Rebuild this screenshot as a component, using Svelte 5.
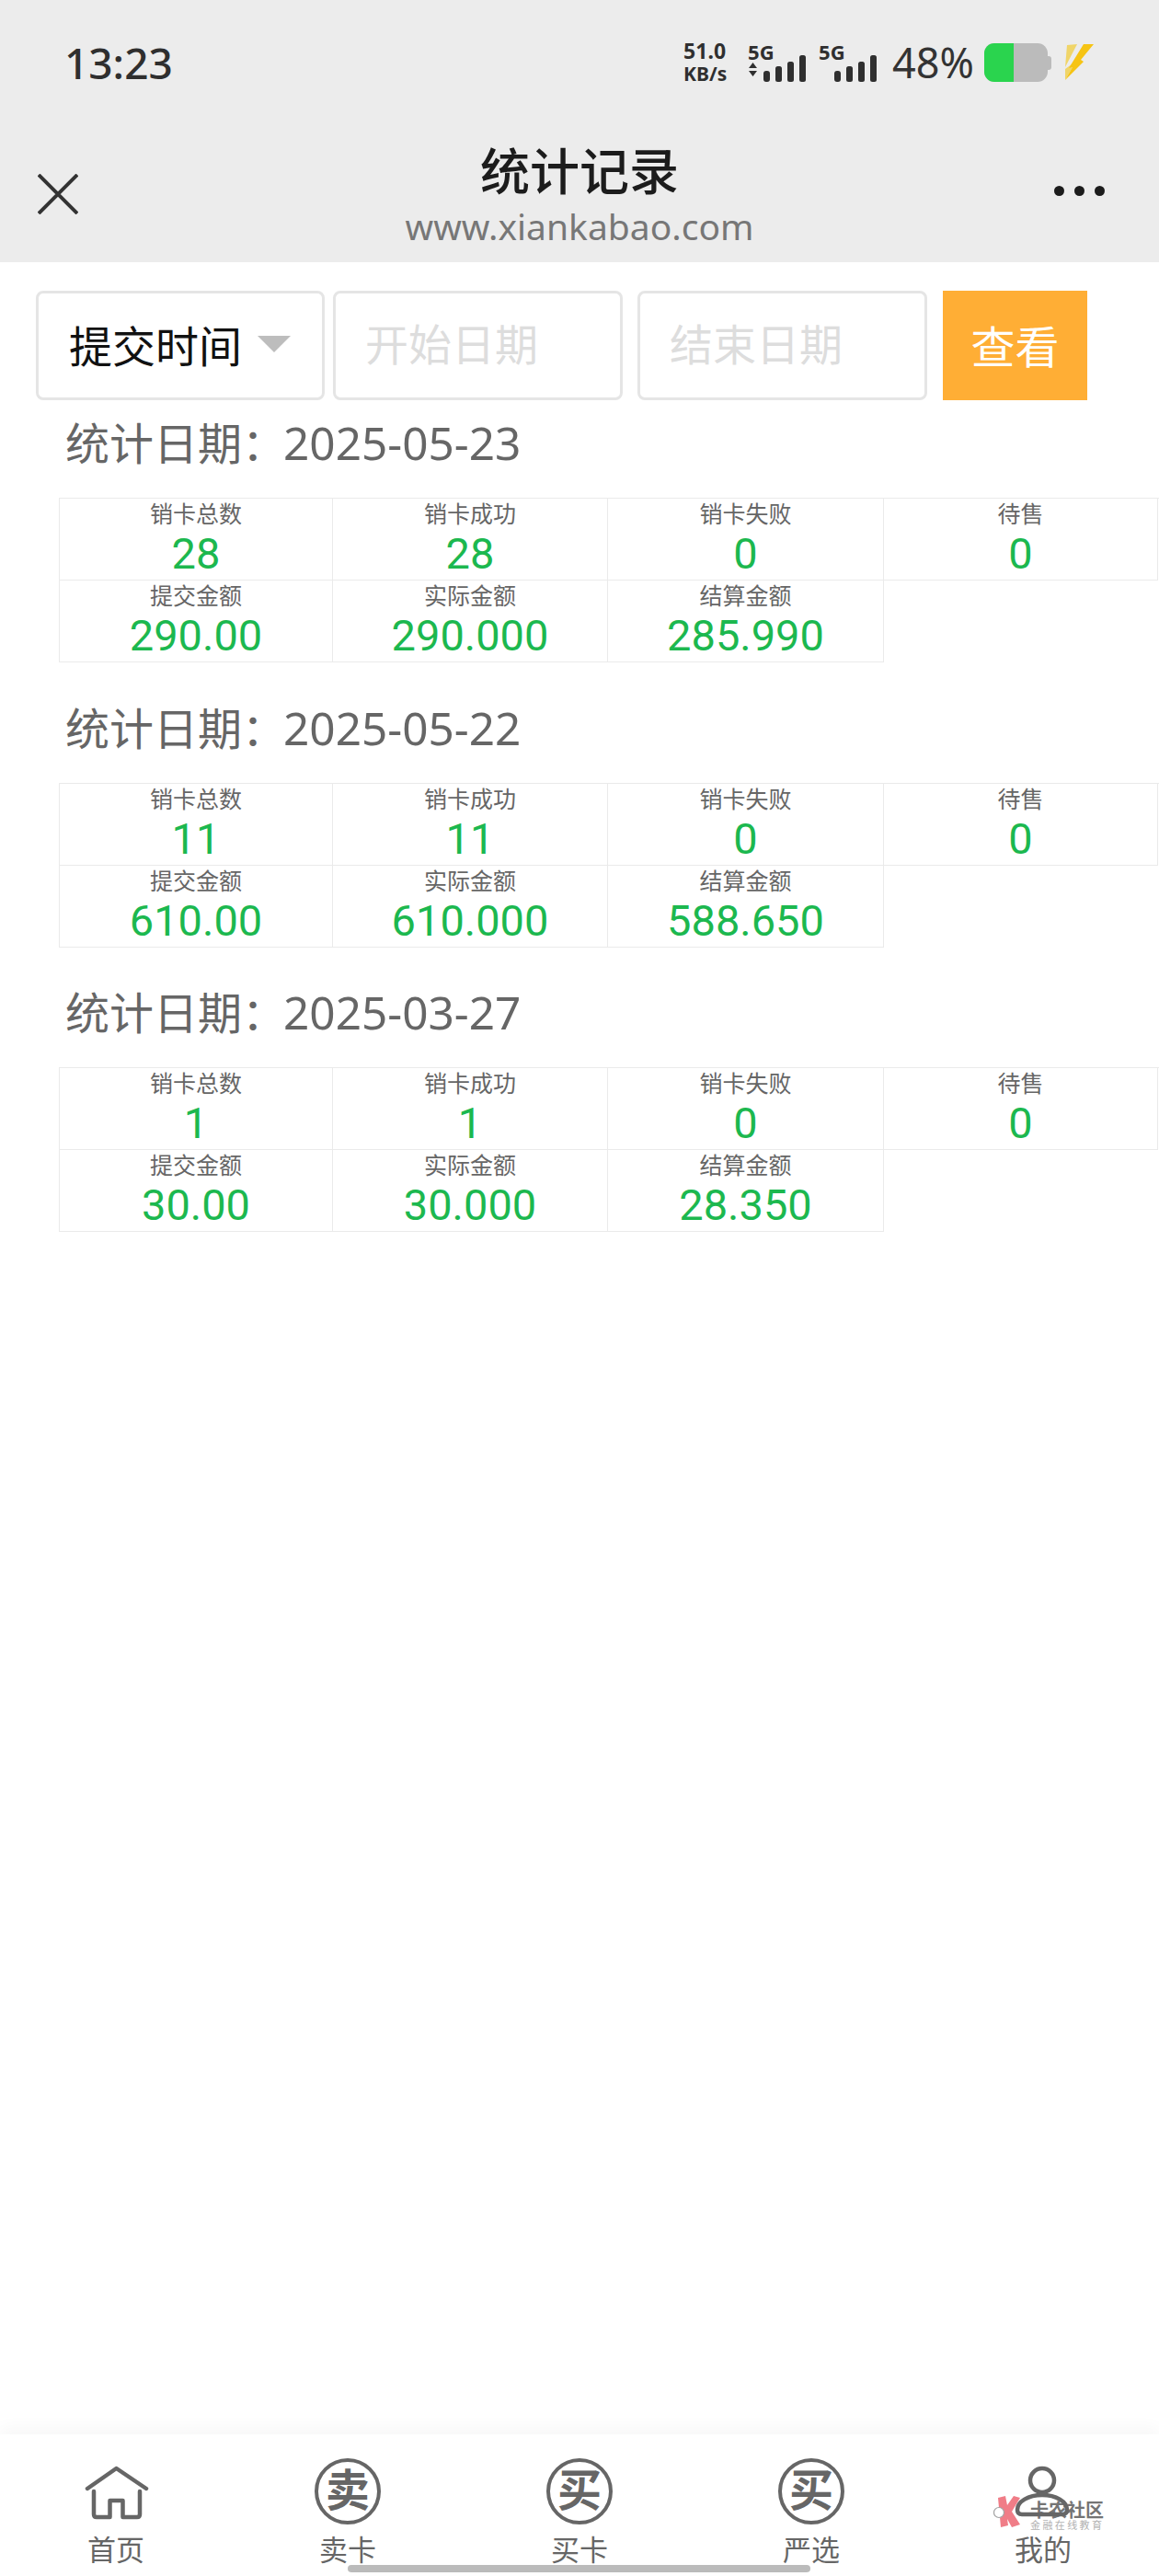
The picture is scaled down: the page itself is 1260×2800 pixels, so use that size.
<script lang="ts">
	const headingPrefix = '统计日期\uFF1A';

	const sections = [
		{
			date: '2025-05-23',
			stats: [
				['销卡总数', '28'],
				['销卡成功', '28'],
				['销卡失败', '0'],
				['待售', '0'],
				['提交金额', '290.00'],
				['实际金额', '290.000'],
				['结算金额', '285.990']
			]
		},
		{
			date: '2025-05-22',
			stats: [
				['销卡总数', '11'],
				['销卡成功', '11'],
				['销卡失败', '0'],
				['待售', '0'],
				['提交金额', '610.00'],
				['实际金额', '610.000'],
				['结算金额', '588.650']
			]
		},
		{
			date: '2025-03-27',
			stats: [
				['销卡总数', '1'],
				['销卡成功', '1'],
				['销卡失败', '0'],
				['待售', '0'],
				['提交金额', '30.00'],
				['实际金额', '30.000'],
				['结算金额', '28.350']
			]
		}
	];
</script>

{#snippet signal(arrows: boolean)}
	<div class="signal" class:arrows>
		<span class="signal-type">5G</span>
		<svg class="signal-bars" viewBox="0 0 64 30" width="64" height="30" fill="#2f2f2f">
			{#if arrows}
				<path d="M1 14 L5.5 8 L10 14 Z M1 17 L10 17 L5.5 23 Z" />
			{/if}
			<rect x="17" y="17" width="7" height="12" rx="3" />
			<rect x="30" y="12" width="7" height="17" rx="2.5" />
			<rect x="43" y="7" width="7" height="22" rx="2.5" />
			<rect x="56" y="0" width="7" height="29" rx="2.5" />
		</svg>
	</div>
{/snippet}

<div class="page">
	<header class="top">
		<div class="status">
			<span class="clock">13:23</span>
			<div class="status-right">
				<div class="speed"><span>51.0</span><span>KB/s</span></div>
				{@render signal(true)}
				{@render signal(false)}
				<span class="battery-pct">48%</span>
				<div class="battery">
					<div class="battery-body"><div class="battery-fill"></div></div>
					<div class="battery-nub"></div>
				</div>
				<svg class="bolt" viewBox="9 11 36 40" width="36" height="40">
					<path d="M15 12 L26 11 L13 36 Z" fill="#f0d569" />
					<path d="M13 38 L24 30 L21 36 L13 50 Z" fill="#f0d569" />
					<path d="M33 11 L44 11 L30 28 L33 30 L13 50 L21 36 L17 37 Z" fill="#f6c414" />
				</svg>
			</div>
		</div>
		<div class="titlebar">
			<svg class="close" viewBox="0 0 44 44" width="44" height="44" fill="none" stroke="#333" stroke-width="4">
				<path d="M1 1 L43 43 M43 1 L1 43" />
			</svg>
			<div class="title-text">
				<h1>统计记录</h1>
				<p>www.xiankabao.com</p>
			</div>
			<div class="dots"><i></i><i></i><i></i></div>
		</div>
	</header>

	<main>
		<div class="filter">
			<div class="select">
				<span>提交时间</span>
				<i class="caret"></i>
			</div>
			<input class="date-input" placeholder="开始日期" />
			<input class="date-input gap-wide" placeholder="结束日期" />
			<button class="view-btn">查看</button>
		</div>

		{#each sections as section}
			<section>
				<h2>{headingPrefix}<span>{section.date}</span></h2>
				<div class="grid">
					{#each section.stats as [label, value]}
						<div class="cell">
							<div class="cell-label">{label}</div>
							<div class="cell-value">{value}</div>
						</div>
					{/each}
				</div>
			</section>
		{/each}
	</main>

	<nav>
		<div class="nav-item">
			<svg viewBox="0 0 72 72" width="72" height="72" fill="none" stroke="#666" stroke-width="4.5" stroke-linejoin="round" stroke-linecap="round">
				<path d="M5 33 L36.5 11 L69 33" />
				<path d="M12 36 V61 Q12 64 15 64 H29.5 V46 H43.5 V64 H59 Q62 64 62 61 V36" />
			</svg>
			<span>首页</span>
		</div>
		<div class="nav-item">
			<div class="seal">卖</div>
			<span>卖卡</span>
		</div>
		<div class="nav-item">
			<div class="seal">买</div>
			<span>买卡</span>
		</div>
		<div class="nav-item">
			<div class="seal">买</div>
			<span>严选</span>
		</div>
		<div class="nav-item">
			<svg viewBox="0 0 72 72" width="72" height="72" fill="none" stroke="#666" stroke-width="4.5">
				<circle cx="35" cy="24" r="13" />
				<path d="M8 56 C8 47 20 40 35 40 C50 40 62 47 62 56 C62 60 60 61 57 61 H13 C10 61 8 60 8 56 Z" />
			</svg>
			<span>我的</span>
		</div>
	</nav>

	<div class="watermark">
		<svg viewBox="0 0 30 36" width="30" height="36">
			<path d="M5 2 L13 0 L15 10 L22 0 L29 2 L20 17 L29 31 L20 34 L15 25 L16 32 L8 34 Z" fill="#ef6f7b" />
			<circle cx="6" cy="18" r="5.5" fill="#fff" stroke="#999" stroke-width="1.2" />
		</svg>
		<div class="watermark-text">
			<b>卡农社区</b>
			<small>金融在线教育</small>
		</div>
	</div>
	<div class="home-bar"></div>
</div>

<style>
	:global(body) {
		background: #fff;
	}
	.page {
		position: relative;
		display: flex;
		flex-direction: column;
		width: 1260px;
		height: 2800px;
		overflow: hidden;
		background: #fff;
		font-family: 'Noto Sans', 'Noto Sans CJK SC', sans-serif;
	}

	/* header */
	.top {
		height: 285px;
		background: #ececec;
	}
	.status {
		display: flex;
		align-items: center;
		justify-content: space-between;
		height: 136px;
		padding: 0 70px;
	}
	.clock {
		font-size: 46px;
		font-weight: 500;
		color: #2f2f2f;
	}
	.status-right {
		display: flex;
		align-items: center;
	}
	.speed {
		display: flex;
		flex-direction: column;
		width: 70px;
		font-size: 23px;
		font-weight: 700;
		line-height: 25px;
		color: #2f2f2f;
	}
	.speed span:last-child {
		font-size: 21px;
	}
	.signal {
		display: grid;
		width: 64px;
		height: 44px;
		margin-right: 13px;
	}
	.signal-type,
	.signal-bars {
		grid-area: 1 / 1;
	}
	.signal-type {
		font-size: 22px;
		font-weight: 700;
		line-height: 20px;
		color: #2f2f2f;
	}
	.signal-bars {
		align-self: end;
	}
	.battery-pct {
		margin: 0 11px 0 3px;
		font-size: 45px;
		line-height: 50px;
		color: #333;
	}
	.battery {
		display: flex;
		align-items: center;
		margin-right: 11px;
	}
	.battery-body {
		width: 69px;
		height: 42px;
		background: #bbb;
		border-radius: 11px;
		overflow: hidden;
	}
	.battery-fill {
		width: 32px;
		height: 100%;
		background: #2ad44e;
	}
	.battery-nub {
		width: 4px;
		height: 15px;
		background: #bbb;
		border-radius: 0 3px 3px 0;
	}

	.titlebar {
		display: grid;
		grid-template-columns: 1fr auto 1fr;
		align-items: start;
		padding: 18px 41px 0;
	}
	.close {
		margin-top: 35px;
	}
	.title-text {
		text-align: center;
	}
	.title-text h1 {
		margin: 0;
		font-size: 54px;
		font-weight: 500;
		line-height: 64px;
		color: #1c1c1c;
	}
	.title-text p {
		margin: 6px 0 0;
		font-size: 39px;
		line-height: 44px;
		color: #777;
	}
	.dots {
		display: flex;
		justify-content: flex-end;
		gap: 11px;
		margin-top: 48px;
		padding-right: 18px;
	}
	.dots i {
		width: 11px;
		height: 11px;
		background: #1c1c1c;
		border-radius: 50%;
	}

	/* filter row */
	main {
		flex: 1;
	}
	.filter {
		display: flex;
		gap: 9px;
		padding: 31px 0 0 39px;
	}
	.select,
	.date-input {
		box-sizing: border-box;
		width: 315px;
		height: 119px;
		border: 3px solid #e5e5e5;
		border-radius: 8px;
		background: #fff;
		font-family: inherit;
		font-size: 47px;
	}
	.select {
		display: flex;
		align-items: center;
		width: 314px;
		padding: 0 0 4px 33px;
		color: #111;
	}
	.caret {
		width: 0;
		height: 0;
		margin: 0 0 0 17px;
		border-style: solid;
		border-width: 18px 18px 0;
		border-color: #bdbdbd transparent transparent;
	}
	.date-input {
		padding: 0 0 4px 32px;
		outline: none;
	}
	.date-input::placeholder {
		color: #ddd;
		opacity: 1;
	}
	.gap-wide {
		margin-left: 7px;
	}
	.view-btn {
		width: 157px;
		height: 119px;
		margin-left: 8px;
		padding: 0 0 4px;
		border: none;
		background: #ffae35;
		color: #fff;
		font-family: inherit;
		font-size: 48px;
	}

	/* stat tables */
	section {
		margin-bottom: 24.5px;
	}
	h2 {
		height: 95px;
		margin: 0 0 11px;
		padding-left: 71px;
		font-size: 48px;
		font-weight: 400;
		line-height: 92px;
		color: #666;
	}
	h2 span {
		margin-left: -3px;
		font-size: 49.5px;
	}
	.grid {
		display: grid;
		grid-template-columns: 297px 299px 300px 298px;
		margin-left: 64px;
		border-top: 1px solid #eaeaea;
		border-left: 1px solid #eaeaea;
	}
	.cell {
		height: 88px;
		border-right: 1px solid #eaeaea;
		border-bottom: 1px solid #eaeaea;
		text-align: center;
	}
	.cell-label {
		height: 35px;
		font-size: 25px;
		line-height: 33px;
		color: #666;
	}
	.cell-value {
		font-family: Roboto, 'Noto Sans', sans-serif;
		font-size: 47px;
		line-height: 50px;
		color: #1cb84f;
	}

	/* bottom nav */
	nav {
		display: flex;
		height: 154px;
		box-shadow: 0 -8px 16px rgba(0, 0, 0, 0.03);
		background: #fff;
	}
	.nav-item {
		display: flex;
		flex: 1;
		flex-direction: column;
		align-items: center;
		padding-top: 26px;
	}
	.nav-item span {
		margin-top: 10px;
		font-size: 31px;
		line-height: 34px;
		color: #666;
	}
	.seal {
		box-sizing: border-box;
		width: 72px;
		height: 72px;
		border: 4px solid #666;
		border-radius: 50%;
		font-size: 48px;
		font-weight: 700;
		line-height: 60px;
		text-align: center;
		color: #666;
	}

	/* overlays */
	.watermark {
		position: absolute;
		top: 2713px;
		left: 1080px;
		display: flex;
		gap: 10px;
		opacity: 0.9;
	}
	.watermark-text {
		display: flex;
		flex-direction: column;
		padding-top: 5px;
	}
	.watermark-text b {
		font-size: 20px;
		line-height: 21px;
		color: #666;
	}
	.watermark-text small {
		font-size: 11px;
		line-height: 12px;
		letter-spacing: 2.4px;
		color: #aaa;
	}
	.home-bar {
		position: absolute;
		top: 2788px;
		left: 378px;
		width: 503px;
		height: 8px;
		background: #bbb;
		border-radius: 4px;
	}
</style>
